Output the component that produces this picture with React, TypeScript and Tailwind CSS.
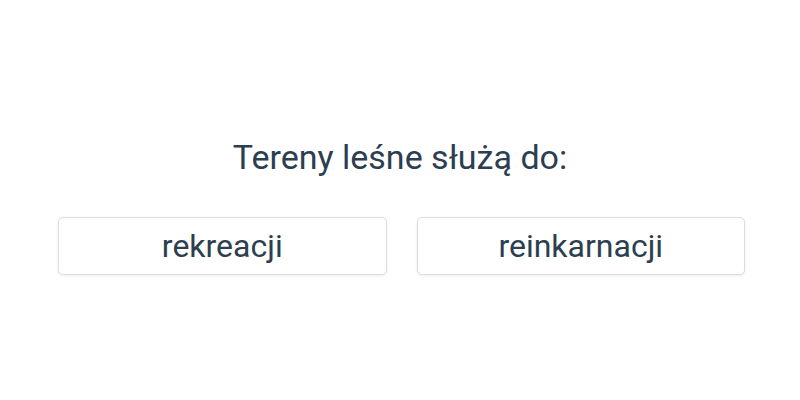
export default function App() {
  const answers = ['rekreacji', 'reinkarnacji']

  return (
    <div className="flex h-[400px] w-[800px] flex-col items-center bg-white font-['Roboto',sans-serif] text-[#2c3e50]">
      <h1 className="mt-[137px] text-[34px] leading-[40px]">Tereny leśne służą do:</h1>
      <div className="mt-[40px] grid w-full grid-cols-2 gap-[30px] pl-[58px] pr-[55px]">
        {answers.map((a) => (
          <button
            key={a}
            className="h-[58px] rounded-[5px] border border-[#dedede] bg-white text-[32px] leading-none text-[#2c3e50] shadow-[0_1px_3px_rgba(0,0,0,0.08)]"
          >
            {a}
          </button>
        ))}
      </div>
    </div>
  )
}
